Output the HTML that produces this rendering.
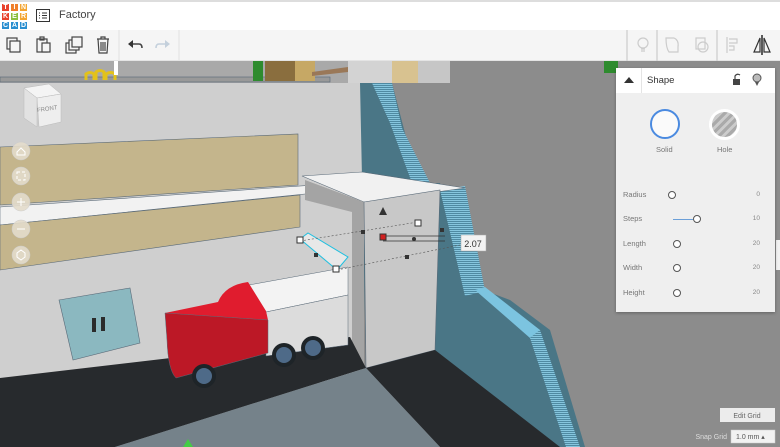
<!DOCTYPE html>
<html><head><meta charset="utf-8"><style>
*{margin:0;padding:0;box-sizing:border-box}
body{width:780px;height:447px;overflow:hidden;font-family:"Liberation Sans",sans-serif;background:#fff;position:relative}
.top{position:absolute;left:0;top:0;width:780px;height:30px;background:#fff;border-top:2px solid #ddd}
.tb{position:absolute;left:0;top:30px;width:780px;height:31px;background:#f5f5f5;border-bottom:1px solid #e4e4e4}
.logo{position:absolute;left:1px;top:1px;width:27px;height:27px;display:grid;grid-template-columns:repeat(3,9px);grid-template-rows:repeat(3,9px);font-size:7px;color:#fff;font-weight:bold;text-align:center;line-height:9px;overflow:hidden}
.logo span{display:block;width:9px;height:9px;border:0.5px solid #fff;line-height:8px}
.panel{position:absolute;left:616px;top:68px;width:159px;height:244px;background:#efefef;box-shadow:0 1px 3px rgba(0,0,0,.3);font-size:8px;color:#666}
.ph{height:25px;background:#fff;position:relative}
.row{position:absolute;left:7px;font-size:7.5px;color:#777}
.val{position:absolute;right:15px;font-size:6.5px;color:#888}
.knob{position:absolute;width:8px;height:8px;border:1px solid #555;border-radius:50%;background:#fff}
</style></head><body>
<div class="top">
 <div class="logo"><span style="background:#e8412c">T</span><span style="background:#f07f2a">I</span><span style="background:#f3a531">N</span><span style="background:#e8412c">K</span><span style="background:#8bbf3f">E</span><span style="background:#f3a531">R</span><span style="background:#2a8fd0">C</span><span style="background:#2a8fd0">A</span><span style="background:#2a8fd0">D</span></div>
 <svg style="position:absolute;left:36px;top:7px" width="14" height="13"><rect x="0.5" y="0.5" width="13" height="12" fill="none" stroke="#333"/><path d="M3 4h1M6 4h5M3 6.5h1M6 6.5h5M3 9h1M6 9h5" stroke="#333"/></svg>
 <div style="position:absolute;left:59px;top:7px;font-size:11px;color:#444">Factory</div>
</div>
<div class="tb">
 <svg width="780" height="31" style="position:absolute;left:0;top:0" fill="none" stroke="#444" stroke-width="1.2">
  <rect x="7" y="8" width="10" height="11"/><rect x="10" y="11" width="10" height="11" fill="#f5f5f5"/>
  <rect x="37" y="9" width="10" height="13"/><rect x="40" y="7" width="4" height="3"/><rect x="42" y="13" width="8" height="9" fill="#f5f5f5"/>
  <rect x="66" y="13" width="10" height="10"/><rect x="69" y="10" width="10" height="10" fill="#f5f5f5"/><rect x="72" y="7" width="10" height="10" fill="#f5f5f5"/>
  <path d="M97 9h12M101 9v-2h4v2M98 9l1 14h8l1-14M101 12v9M103 12v9M105 12v9"/>
  <line x1="119" y1="0" x2="119" y2="31" stroke="#e4e4e4"/>
  <path d="M129 14h10q3 0 3 4" stroke-width="1.6"/><path d="M128 14l5-4v8z" fill="#333" stroke="none"/>
  <path d="M166 14h-7q-3 0 -3 4" stroke="#c4d0dc" stroke-width="1.6"/><path d="M170 14l-5-4v8z" fill="#c4d0dc" stroke="none"/>
  <line x1="179" y1="0" x2="179" y2="31" stroke="#e4e4e4"/>
  <g stroke="#ccc"><line x1="627" y1="0" x2="627" y2="31"/><line x1="657" y1="0" x2="657" y2="31"/><line x1="717" y1="0" x2="717" y2="31"/>
  <circle cx="643" cy="13" r="5"/><path d="M641 19h4M641 21h4"/>
  <path d="M666 8h8q5 2 4 9v5h-9q-3 -4 -3 -14z"/>
  <rect x="696" y="8" width="9" height="11"/><circle cx="703" cy="17" r="5"/>
  <path d="M727 7v16M729 9h8v4h-8M729 16h5v4h-5"/></g>
  <path d="M760 8l-6 14h6zM764 8l6 14h-6z" stroke="#333"/><line x1="762" y1="5" x2="762" y2="25" stroke="#333" stroke-width="1.6"/>
 </svg>
</div>
<svg style="position:absolute;left:0;top:61px" width="780" height="386">
 <defs><pattern id="st" width="6" height="2" patternUnits="userSpaceOnUse"><rect width="6" height="2" fill="#4f8aa2"/><rect width="6" height="1" fill="#86c6de"/></pattern></defs>
 <g transform="translate(0,-61)">
 <rect x="0" y="61" width="780" height="386" fill="#8c8c8c"/>
 <rect x="0" y="61" width="360" height="22" fill="#a9a9a9"/>
 <rect x="0" y="77" width="330" height="5" fill="#999" stroke="#567" stroke-width=".6"/>
 <path d="M86 80v-6q4-3 8 0v6M96 80v-8q4-3 8 0v8M106 80v-6q5-3 9 0v6" stroke="#e3c21a" stroke-width="3" fill="none"/>
 <rect x="114" y="61" width="4" height="14" fill="#fff"/>
 <rect x="253" y="61" width="10" height="20" fill="#2e8b2e"/><rect x="265" y="61" width="30" height="20" fill="#8a6e3e"/><rect x="295" y="61" width="20" height="20" fill="#c6a865"/>
 <rect x="348" y="61" width="44" height="22" fill="#d3d3d3"/><rect x="392" y="61" width="26" height="22" fill="#d8c290"/><rect x="418" y="61" width="32" height="22" fill="#c6c6c6"/>
 <path d="M312 72l36-5v5l-36 4z" fill="#9a7858"/>
 <rect x="604" y="61" width="14" height="12" fill="#2e8b2e"/>
 <path d="M0 83h362l0 300L0 378z" fill="#cfcfcf"/>
 <path d="M0 147L298 134V185L0 205z" fill="#c4b58c" stroke="#5a6a78" stroke-width=".6"/>
 <path d="M0 207L315 185V193L0 225z" fill="#f2f2f2" stroke="#5a6a78" stroke-width=".6"/>
 <path d="M0 225L300 195V227L0 270z" fill="#c4b58c" stroke="#5a6a78" stroke-width=".6"/>
 <path d="M360 83h32l26 100h22L470 285l40 15 40 30 35 117H440L435 350 366 368z" fill="#4a7686"/>
 <path d="M372 83h20l10 45 28 55h-18l-22-60z" fill="url(#st)"/>
 <path d="M440 190l25-4 20 105-20 5z" fill="url(#st)"/>
 <path d="M475 290l10-3 55 43-10 8z" fill="#7cc4e0"/>
 <path d="M530 338l10-8 40 117h-14z" fill="url(#st)"/>
 <path d="M302 176L362 172L465 188L364 202z" fill="#f1f1f1" stroke="#5a6a78" stroke-width=".6"/>
 <path d="M305 180L364 202V368L352 345V212L305 200z" fill="#a4a4a4"/>
 <path d="M364 202L440 190L435 350L366 368z" fill="#c8c8c8" stroke="#5a6a78" stroke-width=".6"/>
 <path d="M0 378L350 337L366 368L115 447H0z" fill="#272a2d"/>
 <path d="M366 368L435 350L560 447H440z" fill="#272a2d"/>
 <path d="M366 368L440 447H115z" fill="#75828a"/>
 <path d="M59 300L130 288L140 343L73 360z" fill="#8bb8c0" stroke="#5a6a78" stroke-width=".6"/>
 <rect x="92" y="318" width="4" height="14" fill="#2b2b2b"/><rect x="101" y="317" width="4" height="14" fill="#2b2b2b"/>
 <path d="M249 285L348 267V295L266 312z" fill="#f3f3f3" stroke="#5a6a78" stroke-width=".5"/>
 <path d="M266 312L348 295V345L266 356z" fill="#dcdcdc" stroke="#5a6a78" stroke-width=".5"/>
 <path d="M165 313L218 302Q225 285 248 282L266 311L268 320Z" fill="#e01c2e"/>
 <path d="M165 313L268 320V353L176 378Q168 370 167 340z" fill="#bc1826" stroke="#5a6a78" stroke-width=".5"/>
 <circle cx="204" cy="376" r="12" fill="#1e2428"/><circle cx="204" cy="376" r="8" fill="#4e6a88"/>
 <circle cx="284" cy="355" r="12" fill="#1e2428"/><circle cx="284" cy="355" r="8" fill="#4e6a88"/>
 <circle cx="313" cy="348" r="12" fill="#1e2428"/><circle cx="313" cy="348" r="8" fill="#4e6a88"/>
 <path d="M300 239L308 233L348 257L337 270z" fill="#e8e8e8" stroke="#20c0e0" stroke-width="1"/>
 <g stroke="#555" stroke-dasharray="2 2" stroke-width=".6" fill="none"><path d="M300 241L418 222"/><path d="M337 270L460 245"/></g>
 <rect x="297" y="237" width="6" height="6" fill="#fff" stroke="#333"/><rect x="333" y="266" width="6" height="6" fill="#fff" stroke="#333"/><rect x="415" y="220" width="6" height="6" fill="#fff" stroke="#333"/>
 <rect x="361" y="230" width="4" height="4" fill="#333"/><rect x="405" y="255" width="4" height="4" fill="#333"/><rect x="314" y="253" width="4" height="4" fill="#333"/><rect x="440" y="228" width="4" height="4" fill="#333"/>
 <rect x="380" y="234" width="6" height="6" fill="#d02020" stroke="#333"/>
 <path d="M383 241H445M386 236H445" stroke="#333" stroke-width=".8"/><circle cx="414" cy="239" r="2" fill="#333"/>
 <path d="M379 215l4-8 4 8z" fill="#333"/>
 <rect x="461" y="235" width="25" height="16" fill="#f3f3f3" stroke="#aaa" stroke-width=".5"/>
 <text x="473" y="247" font-size="9" text-anchor="middle" fill="#333" font-family="Liberation Sans">2.07</text>
 <path d="M24 88l25-4 12 10-24 4z" fill="#f4f4f4" stroke="#bbb" stroke-width=".5"/>
 <path d="M37 98l24-4v28l-22 5z" fill="#eee" stroke="#bbb" stroke-width=".5"/>
 <path d="M24 88l13 10v29l-13-9z" fill="#e2e2e2" stroke="#bbb" stroke-width=".5"/>
 <text x="37" y="111" font-size="6" fill="#888" font-family="Liberation Sans" transform="rotate(-8 45 110)">FRONT</text>
 <g fill="#e3dccb" fill-opacity=".9" stroke="#ccc" stroke-width=".5"><circle cx="21" cy="151" r="9"/><circle cx="21" cy="176" r="9"/><circle cx="21" cy="202" r="9"/><circle cx="21" cy="229" r="9"/><circle cx="21" cy="255" r="9"/></g>
 <g stroke="#fff" fill="none" stroke-width="1"><path d="M17 152l4-4 4 4v3h-8z"/><rect x="17" y="172" width="8" height="8" stroke-dasharray="3 2"/><path d="M17 202h8M21 198v8M17 229h8"/><path d="M21 250l4 3v4l-4 3-4-3v-4z"/></g>
 <path d="M183 447l5-8 5 8z" fill="#4c4"/>
 <rect x="720" y="408" width="55" height="14" fill="#ececec"/>
 <text x="747" y="418" font-size="7" text-anchor="middle" fill="#666" font-family="Liberation Sans">Edit Grid</text>
 <text x="727" y="439" font-size="7" text-anchor="end" fill="#ddd" font-family="Liberation Sans">Snap Grid</text>
 <rect x="731" y="430" width="44" height="13" fill="#f2f2f2" stroke="#ccc" stroke-width=".5"/>
 <text x="736" y="439" font-size="7" fill="#555" font-family="Liberation Sans">1.0 mm ▴</text>
 <rect x="776" y="240" width="4" height="30" fill="#f2f2f2"/>
 </g>
</svg>
<div class="panel">
 <div class="ph">
  <svg style="position:absolute;left:8px;top:9px" width="10" height="6"><path d="M0 6L5 0L10 6z" fill="#333"/></svg>
  <div style="position:absolute;left:25px;top:0;width:1px;height:25px;background:#e4e4e4"></div>
  <div style="position:absolute;left:31px;top:7px;font-size:9.5px;color:#333">Shape</div>
  <svg style="position:absolute;left:116px;top:5px" width="30" height="14"><rect x="1" y="6" width="7" height="6" fill="#444"/><path d="M3 6V3q2-3 5-1" stroke="#444" fill="none" stroke-width="1.2"/><circle cx="25" cy="5" r="4" fill="#bbb" stroke="#555"/><path d="M23 9l2 4 2-4" fill="#555"/></svg>
 </div>
 <div style="position:absolute;left:34px;top:41px;width:30px;height:30px;border-radius:50%;border:2px solid #4a8ae0;background:#fafafa"></div>
 <div style="position:absolute;left:93px;top:41px;width:31px;height:31px;border-radius:50%;border:3px solid #fff;background:repeating-linear-gradient(-45deg,#aaa 0 3px,#ccc 3px 6px)"></div>
 <div class="row" style="left:40px;top:77px">Solid</div>
 <div class="row" style="left:101px;top:77px">Hole</div>
 <div class="row" style="top:122px">Radius</div><div class="knob" style="left:52px;top:123px"></div><div class="val" style="top:123px">0</div>
 <div class="row" style="top:146px">Steps</div><div style="position:absolute;left:57px;top:151px;width:20px;height:1px;background:#6b9fd8"></div><div class="knob" style="left:77px;top:147px"></div><div class="val" style="top:147px">10</div>
 <div class="row" style="top:171px">Length</div><div class="knob" style="left:57px;top:172px"></div><div class="val" style="top:172px">20</div>
 <div class="row" style="top:195px">Width</div><div class="knob" style="left:57px;top:196px"></div><div class="val" style="top:196px">20</div>
 <div class="row" style="top:220px">Height</div><div class="knob" style="left:57px;top:221px"></div><div class="val" style="top:221px">20</div>
</div>
</body></html>
